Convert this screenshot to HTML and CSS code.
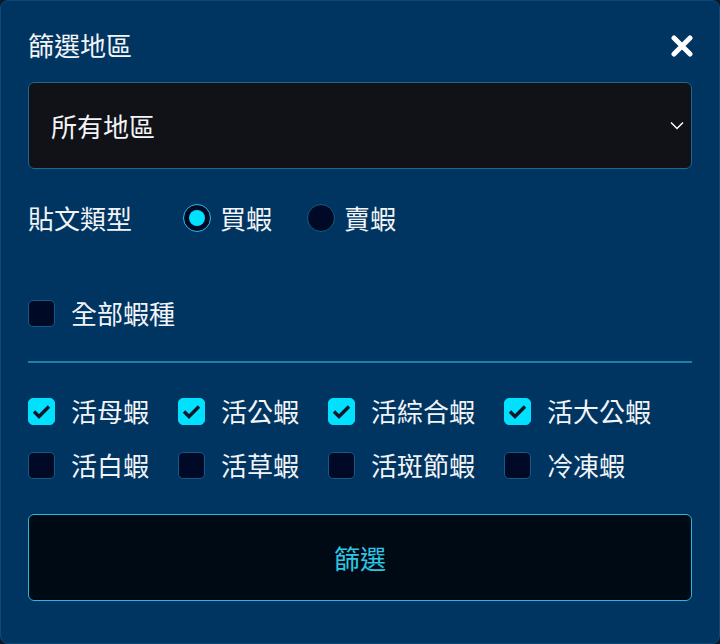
FILE: index.html
```html
<!DOCTYPE html>
<html lang="zh-Hant">
<head>
<meta charset="utf-8">
<link rel="stylesheet" href="styles.css">
</head>
<body>
<div class="panel">
  <div class="header">
    <div class="title">篩選地區</div>
    <svg class="close" width="22" height="22" viewBox="0 0 22 22"><path d="M3 3 L19 19 M19 3 L3 19" stroke="#fff" stroke-width="5" stroke-linecap="round"/></svg>
  </div>
  <div class="select">
    <span>所有地區</span>
    <svg class="chev" width="14" height="9" viewBox="0 0 14 9"><path d="M1 1.5 L7 7.5 L13 1.5" stroke="#fff" stroke-width="1.5" fill="none"/></svg>
  </div>
  <div class="type-row">
    <span class="label">貼文類型</span>
    <label class="radio-item"><span class="radio checked"></span><span>買蝦</span></label>
    <label class="radio-item"><span class="radio"></span><span>賣蝦</span></label>
  </div>
  <div class="all-row">
    <span class="box"></span><span>全部蝦種</span>
  </div>
  <div class="divider"></div>
  <div class="grid">
    <div class="item"><span class="box on"><svg width="19" height="15" viewBox="0 0 19 15"><path d="M2 7.5 L7 12.5 L17 2.5" stroke="#0b1626" stroke-width="3.4" fill="none"/></svg></span><span>活母蝦</span></div>
    <div class="item"><span class="box on"><svg width="19" height="15" viewBox="0 0 19 15"><path d="M2 7.5 L7 12.5 L17 2.5" stroke="#0b1626" stroke-width="3.4" fill="none"/></svg></span><span>活公蝦</span></div>
    <div class="item"><span class="box on"><svg width="19" height="15" viewBox="0 0 19 15"><path d="M2 7.5 L7 12.5 L17 2.5" stroke="#0b1626" stroke-width="3.4" fill="none"/></svg></span><span>活綜合蝦</span></div>
    <div class="item"><span class="box on"><svg width="19" height="15" viewBox="0 0 19 15"><path d="M2 7.5 L7 12.5 L17 2.5" stroke="#0b1626" stroke-width="3.4" fill="none"/></svg></span><span>活大公蝦</span></div>
    <div class="item"><span class="box"></span><span>活白蝦</span></div>
    <div class="item"><span class="box"></span><span>活草蝦</span></div>
    <div class="item"><span class="box"></span><span>活斑節蝦</span></div>
    <div class="item"><span class="box"></span><span>冷凍蝦</span></div>
  </div>
  <div class="button">篩選</div>
</div>
</body>
</html>
```

FILE: styles.css
```css
* { box-sizing: border-box; }
html, body { margin: 0; padding: 0; background: #0b1a2a; }
body {
  font-family: "Noto Sans CJK TC", "Noto Sans", sans-serif;
  color: #f2f4f7;
  font-size: 26px;
  line-height: 1.2;
}
.panel {
  width: 720px;
  height: 644px;
  background: #003562;
  border: 1px solid #0b4a78;
  border-radius: 8px;
  padding: 27px 27px 0 27px;
  display: flex;
  flex-direction: column;
}
.header {
  height: 38px;
  display: flex;
  align-items: center;
  justify-content: space-between;
}
.title { line-height: 38px; margin-top: -4px; }
.close { margin-right: -1px; margin-top: -2px; }
.select {
  margin-top: 16px;
  height: 87px;
  background: #101218;
  border: 1px solid #1a6a90;
  border-radius: 6px;
  display: flex;
  align-items: center;
  justify-content: space-between;
  padding: 0 7px 0 22px;
}
.type-row {
  margin-top: 29px;
  height: 40px;
  display: flex;
  align-items: center;
}
.type-row .label { margin-right: 51px; }
.radio-item {
  display: flex;
  align-items: center;
  gap: 9px;
  margin-right: 35px;
}
.radio {
  width: 28px;
  height: 28px;
  border-radius: 50%;
  background: #000a26;
  border: 1px solid #145b85;
  display: flex;
  align-items: center;
  justify-content: center;
}
.radio.checked {
  border: 1.5px solid #25c2e6;
}
.radio.checked::after {
  content: "";
  width: 16px;
  height: 16px;
  border-radius: 50%;
  background: #00e1ff;
}
.all-row {
  margin-top: 55px;
  height: 40px;
  display: flex;
  align-items: center;
  gap: 16px;
}
.box {
  width: 27px;
  height: 27px;
  border-radius: 5px;
  background: #000a26;
  border: 1px solid #145b85;
  display: flex;
  align-items: center;
  justify-content: center;
  flex: none;
}
.box.on {
  background: #00e1ff;
  border-color: #00e1ff;
}
.divider {
  margin-top: 28px;
  height: 2px;
  background: #1f7fa8;
}
.grid {
  margin-top: 28px;
  display: flex;
  flex-wrap: wrap;
  column-gap: 29px;
  row-gap: 14px;
}
.item {
  height: 40px;
  display: flex;
  align-items: center;
  gap: 16px;
}
.button {
  margin-top: 29px;
  height: 87px;
  background: #000a14;
  border: 1px solid #28b9dc;
  border-radius: 6px;
  color: #2ec6e4;
  display: flex;
  align-items: center;
  justify-content: center;
}
```
